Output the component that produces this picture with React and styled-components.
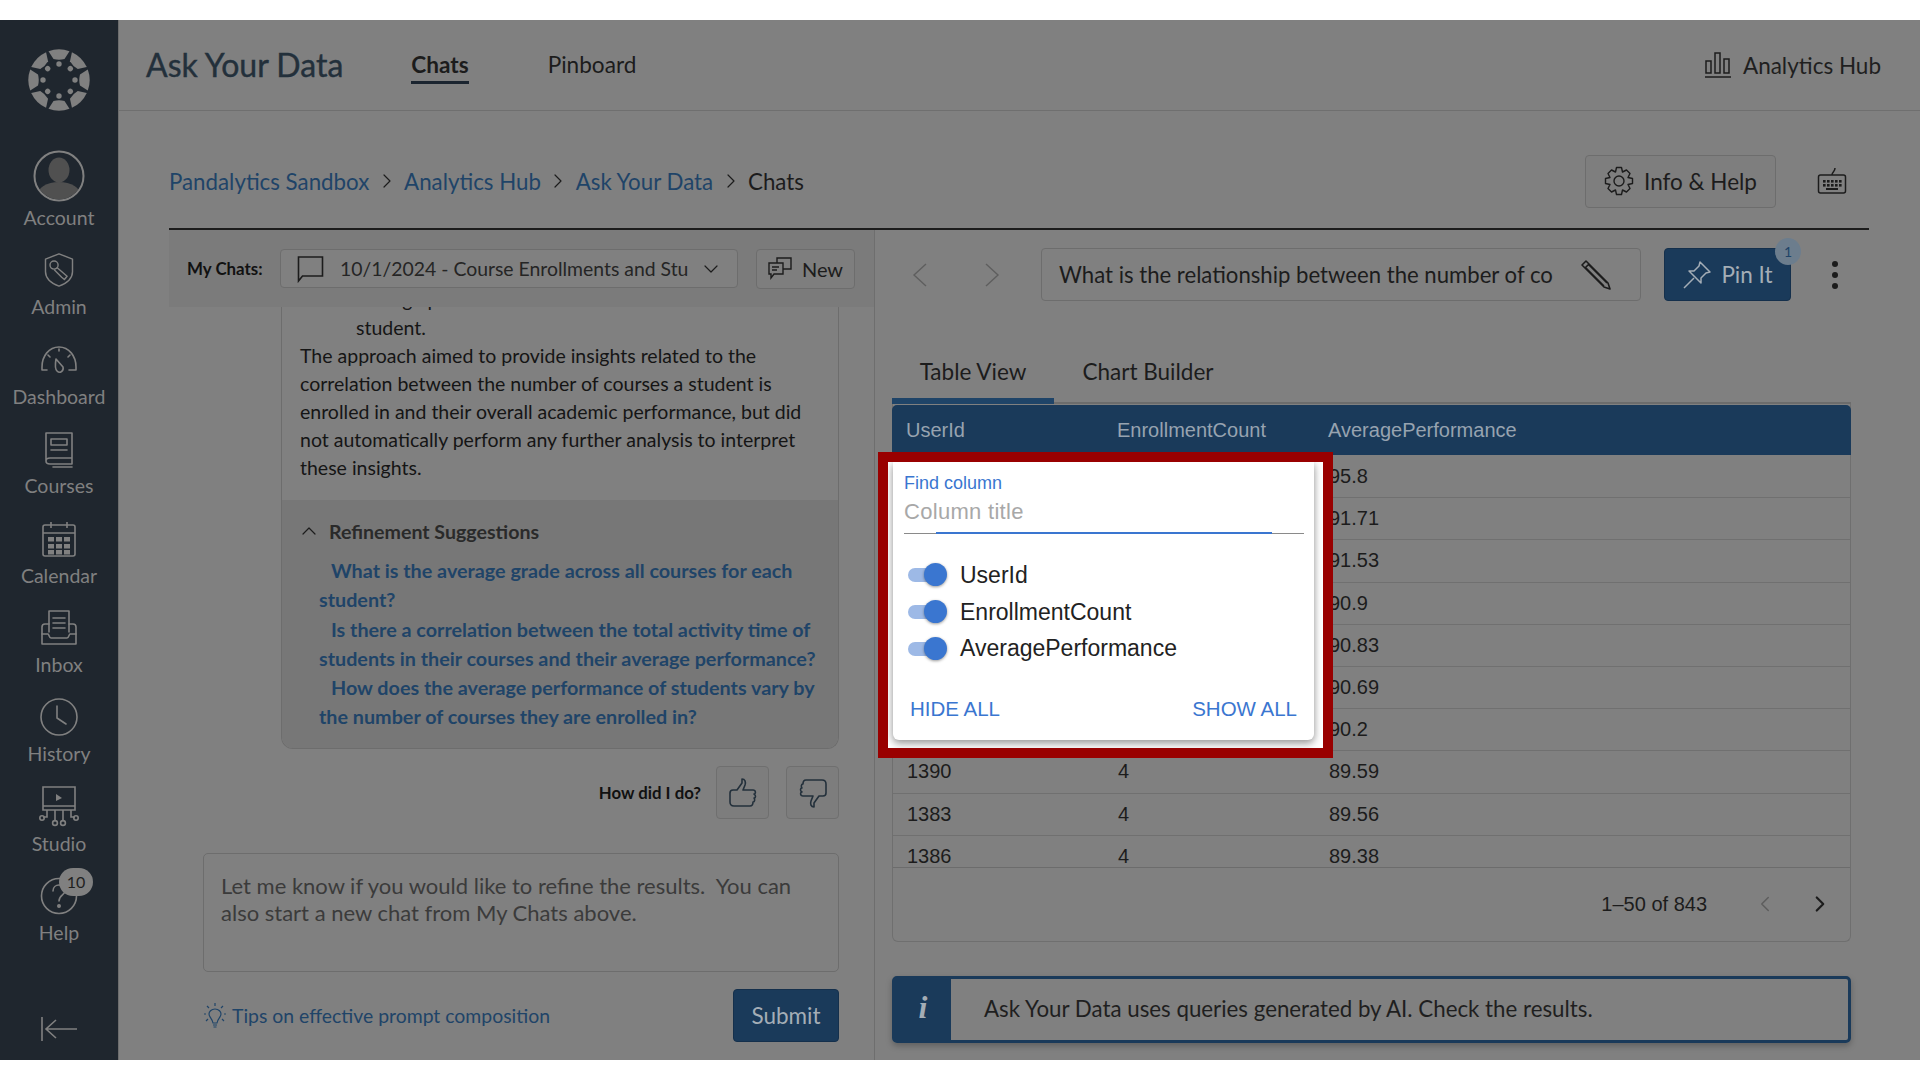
import React from 'react';
import styled, { createGlobalStyle } from 'styled-components';
import { ChevronDown, ChevronLeft, ChevronRight, ChevronUp } from 'lucide-react';

const Global = createGlobalStyle`
  html, body { margin: 0; padding: 0; background: #fff; }
  body { font-family: Lato, "Noto Sans", sans-serif; }
  * { box-sizing: border-box; }
`;

const Page = styled.div`
  width: 1920px; height: 1080px; padding: 20px 0; background: #fff; overflow: hidden;
`;
const Shell = styled.div`
  position: relative; display: flex; width: 1920px; height: 1040px; background: #808080; overflow: hidden;
`;
const Sidebar = styled.nav`
  width: 119px; flex: none; background: #1f262e; border-right: 1px solid #6d6d6d;
  display: flex; flex-direction: column; align-items: center; color: #808080;
`;
const LogoWrap = styled.div`
  height: 90px; margin-top: 29px; margin-bottom: 9px; display: flex; align-items: flex-start;
`;
const NavItem = styled.div`
  height: ${p => p.$height || 89.4}px; width: 100%; flex: none; display: flex; flex-direction: column; align-items: center; justify-content: flex-start;
  font-size: 19.5px; line-height: 24px; position: relative;
`;
const IconSlot = styled.div`
  height: ${p => p.$h || 52}px; display: flex; align-items: center; justify-content: center; margin-bottom: ${p => p.$mb ?? -1}px;
`;
const NavBadge = styled.span`
  position: absolute; left: 59px; top: -2px; width: 34px; height: 28px; border-radius: 14px;
  background: #808080; color: #1f1f1f; font-size: 16px; line-height: 28px; text-align: center;
`;
const Collapse = styled.div`
  margin-top: auto; margin-bottom: 18px; height: 26px; display: flex; align-items: center;
`;
const Main = styled.div`
  flex: 1; min-width: 0; display: flex; flex-direction: column;
`;
const Header = styled.header`
  height: 91px; flex: none; border-bottom: 1px solid #6f6f6f; padding: 0 39px 0 27px; display: flex; align-items: center;
`;
const Title = styled.h1`
  margin: 0; font-size: 32px; font-weight: 400; color: #23303b; line-height: 1; -webkit-text-stroke: .4px #23303b;
`;
const HeadTabs = styled.div`
  display: flex; gap: 79px; margin-left: 68px;
`;
const HeadTab = styled.div`
  position: relative; font-size: 22.6px; font-weight: ${p => p.$on ? 700 : 400}; color: #1c1c1c; height: 30px; line-height: 30px;
  &::after { content: ''; display: ${p => p.$on ? 'block' : 'none'}; height: 3px; background: #1b2530; margin-top: 1px; }
`;
const HubLink = styled.div`
  margin-left: auto; display: flex; align-items: center; gap: 11px; font-size: 22.5px; color: #1f1f1f;
`;
const Content = styled.div`
  flex: 1; min-height: 0; padding: 0 51px 0 50px; display: flex; flex-direction: column;
`;
const CrumbRow = styled.div`
  height: 119px; flex: none; border-bottom: 2px solid #1c1c1c; display: flex; align-items: center; padding-top: 23px;
`;
const Crumbs = styled.div`
  display: flex; align-items: center; font-size: 22.3px; gap: 5.4px;
`;
const CrumbLink = styled.span` color: #1f4468; `;
const CrumbNow = styled.span` color: #1c1c1c; `;
const InfoButton = styled.div`
  margin-left: auto; width: 191px; height: 53px; border: 1px solid #6d6d6d; border-radius: 4px; background: #7e7e7e;
  display: flex; align-items: center; justify-content: center; gap: 10px; font-size: 22.5px; color: #1c1c1c;
`;
const KeyboardSlot = styled.div`
  width: 93px; display: flex; justify-content: flex-end; padding-right: 22px;
`;
const Split = styled.div`
  flex: 1; min-height: 0; display: flex;
`;
const LeftCol = styled.section`
  width: 705px; flex: none; display: flex; flex-direction: column; padding-bottom: 17px;
`;
const ChatBar = styled.div`
  height: 77px; flex: none; background: #7b7b7b; display: flex; align-items: center; padding: 0 19px 0 18px; position: relative; z-index: 1;
`;
const BarLabel = styled.span`
  font-size: 16.9px; font-weight: 700; color: #111; width: 93px; white-space: nowrap;
`;
const Select = styled.div`
  width: 458px; height: 39px; border: 1px solid #6d6d6d; border-radius: 4px; display: flex; align-items: center;
  padding: 0 14px 0 16px; font-size: 19.4px; color: #252525; white-space: nowrap; background: #808080;
`;
const SelectText = styled.span` margin-left: 16px; flex: 1; overflow: hidden; `;
const NewButton = styled.div`
  margin-left: auto; width: 99px; height: 40px; border: 1px solid #6d6d6d; border-radius: 4px; background: #7e7e7e;
  display: flex; align-items: center; justify-content: center; gap: 10px; font-size: 20px; color: #1c1c1c;
`;
const Conversation = styled.div`
  height: 442px; flex: none; margin: 0 35px 0 112px; width: 558px; border: 1px solid #6d6d6d; border-top: 0; border-radius: 0 0 12px 12px;
  display: flex; flex-direction: column; overflow: hidden;
`;
const Reply = styled.div`
  flex: 1; min-height: 0; overflow: hidden; display: flex; flex-direction: column; justify-content: flex-end;
  padding: 0 18px 18px 18px; font-size: 19.5px; line-height: 28px; color: #151515;
`;
const Indented = styled.div` padding-left: 56px; white-space: nowrap; `;
const Suggest = styled.div`
  height: 248px; flex: none; background: #777; padding: 16px 18px 0;
`;
const SuggestHead = styled.div`
  display: flex; align-items: center; gap: 8px; font-size: 19.6px; font-weight: 700; color: #2a2a2a; height: 30px; margin-bottom: 10px; margin-left: -3px;
`;
const SuggestLink = styled.div`
  font-size: 19.75px; font-weight: 700; line-height: 29.3px; color: #1f4468; margin-left: 19px; text-indent: 12px; width: 520px; margin-right: -20px;
`;
const Rating = styled.div`
  height: 53px; margin: 17px 35px 0 0; display: flex; align-items: center; justify-content: flex-end; gap: 17px; flex: none;
`;
const RatingLabel = styled.span`
  font-size: 16.8px; font-weight: 700; color: #111; margin-right: -2px;
`;
const ThumbButton = styled.div`
  width: 53px; height: 53px; border: 1px solid #6f6f6f; border-radius: 4px; background: #7d7d7d; display: flex; align-items: center; justify-content: center;
`;
const Prompt = styled.div`
  height: 119px; margin: 34px 35px 0 34px; border: 1px solid #6d6d6d; border-radius: 5px; padding: 18px 17px; font-size: 22px; line-height: 27.3px;
  color: #3b3b3b; flex: none;
`;
const PromptFoot = styled.div`
  margin: 17px 35px 0 34px; height: 53px; display: flex; align-items: center; flex: none;
`;
const Tips = styled.div`
  display: flex; align-items: center; gap: 5px; font-size: 19.4px; color: #1f4468;
`;
const Submit = styled.div`
  margin-left: auto; width: 106px; height: 53px; border-radius: 4px; background: #1a3a5a; border: 1px solid #15304c; color: #a4adb6;
  display: flex; align-items: center; justify-content: center; font-size: 22.5px;
`;
const RightCol = styled.section`
  flex: 1; min-width: 0; border-left: 1px solid #6e6e6e; padding: 18px 18px 17px 17px; display: flex; flex-direction: column;
`;
const QueryRow = styled.div`
  height: 53px; flex: none; display: flex; align-items: center;
`;
const Arrow = styled.div`
  width: 72px; display: flex; justify-content: flex-start; padding-left: 20px;
`;
const QueryBox = styled.div`
  width: 600px; height: 53px; margin-left: 5px; border: 1px solid #6d6d6d; border-radius: 4px; display: flex; align-items: center; justify-content: space-between;
  padding: 0 28px 0 17px; font-size: 22.15px; color: #1c1c1c; white-space: nowrap;
`;
const PinButton = styled.div`
  position: relative; margin-left: 23px; width: 127px; height: 53px; border-radius: 4px; background: #1a3a5a; color: #a4adb6;
  display: flex; align-items: center; justify-content: center; gap: 9px; font-size: 22.5px; border: 1px solid #15304c;
`;
const PinBadge = styled.span`
  position: absolute; right: -11px; top: -11px; width: 26px; height: 27px; border-radius: 50%; background: #6c7d8d; color: #1f4468;
  font-size: 14px; text-align: center; line-height: 27px;
`;
const Kebab = styled.div`
  margin-left: 41px; display: flex; flex-direction: column; gap: 5px;
  span { width: 6px; height: 6px; border-radius: 50%; background: #1c1c1c; display: block; }
`;
const ViewTabs = styled.div`
  height: 103px; flex: none; display: flex; align-items: flex-end; border-bottom: 2px solid #6c6c6c;
`;
const ViewTab = styled.div`
  width: ${p => p.$w}px; height: 47px; display: flex; justify-content: center; align-items: flex-start; line-height: 30px;
  font-size: 22.5px; color: #1c1c1c; margin-bottom: -2px;
  border-bottom: 6px solid ${p => p.$on ? '#1f4468' : 'transparent'};
`;
const TableCard = styled.div`
  flex: none; height: 537.5px; border: 1px solid #6f6f6f; border-top: 0; border-radius: 0 0 6px 6px; display: flex; flex-direction: column;
  font-family: "Liberation Sans", Arial, sans-serif;
`;
const TableHead = styled.div`
  height: 50px; flex: none; background: #1a3a5a; border-radius: 5px 5px 0 0; margin: 1px -1px 1px; display: grid; grid-template-columns: 211px 211px 1fr;
  align-items: center; padding-left: 14px; font-size: 20px; color: #97a3b0;
`;
const TableBody = styled.div`
  height: 412px; flex: none; overflow: hidden; border-bottom: 1px solid #6c6c6c;
`;
const Row = styled.div`
  height: 42.2px; display: grid; grid-template-columns: 211px 211px 1fr; align-items: center; padding-left: 14px; font-size: 20px; color: #1c1c1c;
  border-bottom: 1px solid #707070;
`;
const Pager = styled.div`
  flex: 1; display: flex; align-items: center; justify-content: flex-end; font-size: 20px; color: #1c1c1c; padding-right: 17px;
`;
const PagerText = styled.span` margin-right: 45px; `;
const PagerGap = styled.span` width: 29px; `;
const Alert = styled.div`
  margin-top: 34px; height: 67px; flex: none; border: 3px solid #1a3a5a; border-radius: 5px; display: flex; box-shadow: 0 3px 6px rgba(0,0,0,.25);
`;
const AlertIcon = styled.div`
  width: 56px; flex: none; background: #1a3a5a; color: #a4adb6; font-family: "Liberation Serif", serif; font-style: italic; font-weight: 700; font-size: 32px;
  display: flex; align-items: center; justify-content: center; padding-bottom: 3px;
`;
const AlertText = styled.div`
  padding-left: 33px; display: flex; align-items: center; font-size: 22.3px; color: #1f1f1f; padding-bottom: 2px;
`;
const Highlight = styled.div`
  position: absolute; left: 878px; top: 432px; width: 455px; height: 306px; border: 10px solid #990000; background: #fff; overflow: hidden;
`;
const ColumnPanel = styled.div`
  margin-left: 5px; width: 421px; height: 278px; background: #fff; border-radius: 0 0 6px 6px; box-shadow: 0 4px 9px rgba(0,0,0,.3), 0 1px 7px rgba(0,0,0,.18);
  font-family: "Liberation Sans", Arial, sans-serif; padding: 11px 10px 0 11px; position: relative;
`;
const FieldLabel = styled.div` font-size: 18px; line-height: 20px; color: #3a76d0; `;
const FieldInput = styled.div`
  position: relative; height: 41px; border-bottom: 1px solid #8a8a8a; font-size: 22px; letter-spacing: .3px; color: #a8a8a8; line-height: 32px; padding-top: 3px;
  &::after { content: ''; position: absolute; left: 32px; right: 32px; bottom: -1px; height: 2px; background: #3a76d0; }
`;
const ToggleList = styled.div` margin-top: 23px; display: flex; flex-direction: column; `;
const ToggleRow = styled.div`
  height: 36.7px; display: flex; align-items: center; font-size: 23px; color: #222; padding-left: 4px;
`;
const Track = styled.span`
  position: relative; width: 36px; height: 14px; border-radius: 7px; background: #9db9e6; margin-right: 16px; flex: none;
  &::after { content: ''; position: absolute; right: -3px; top: -5px; width: 23px; height: 23px; border-radius: 50%; background: #3a76d0; box-shadow: 0 1px 3px rgba(0,0,0,.4); }
`;
const PanelActions = styled.div`
  position: absolute; left: 17px; right: 17px; top: 235px; display: flex; justify-content: space-between; font-size: 20.5px; color: #3a76d0; line-height: 24px;
`;

const S = ({ size = 40, vb = 40, color = '#808080', sw = 1.6, children }) => (
  <svg width={size} height={size} viewBox={`0 0 ${vb} ${vb}`} fill="none" stroke={color} strokeWidth={sw} strokeLinecap="round" strokeLinejoin="round">{children}</svg>
);

const CanvasLogo = () => (
  <svg width="62" height="62" viewBox="-31 -31 62 62" fill="#808080">
    {[0,1,2,3,4,5,6,7].map(i => (
      <g key={i} transform={`rotate(${i*45})`}>
        <path d="M-10.5 -28.8 A30.5 30.5 0 0 1 10.5 -28.8 L5.5 -21 Q0 -19.5 -5.5 -21 Z" />
        <circle cx="0" cy="-16" r="2.7" />
      </g>
    ))}
  </svg>
);
const AccountIcon = () => (
  <svg width="52" height="52" viewBox="0 0 52 52">
    <circle cx="26" cy="26" r="24.5" fill="none" stroke="#808080" strokeWidth="2" />
    <clipPath id="ac"><circle cx="26" cy="26" r="23.5" /></clipPath>
    <g clipPath="url(#ac)" fill="#505050">
      <ellipse cx="26" cy="20" rx="10.5" ry="12.5" />
      <ellipse cx="26" cy="46" rx="22" ry="14" />
    </g>
  </svg>
);
const AdminIcon = () => (
  <S size={36}><path d="M20 2 L35 8 V22 C35 30 28 35 20 38 C12 35 5 30 5 22 V8 Z" /><circle cx="14.5" cy="14.5" r="4.5" /><path d="M18 17.5 L29 27 L26 30.5 L23 28 L15 20" /></S>
);
const DashIcon = () => (
  <S size={40}><path d="M8 30 H3 V27 C3 16 10 7 20 7 C30 7 37 16 37 27 V30 H30" /><path d="M17 19 L24 27 C25 31 21 34 18 31 C16 29 16 25 17 19 Z" /><path d="M20 9 V11 M9 15 L11 17 M31 15 L29 17" /></S>
);
const CoursesIcon = () => (
  <S size={40}><path d="M7 32 V4 H33 V35 H11 C8 35 7 34 7 32 C7 30 8 29 11 29 H33" /><rect x="12" y="10" width="16" height="6" /><path d="M12 21 H28" /><path d="M14 38 H33" /></S>
);
const CalendarIcon = () => (
  <svg width="40" height="40" viewBox="0 0 40 40" fill="none" stroke="#808080" strokeWidth="1.6">
    <rect x="4" y="6" width="32" height="31" rx="2" /><path d="M4 14 H36 M12 3 V9 M28 3 V9" />
    <g fill="#808080" stroke="none">{[10,18,26].map(x => [18,25,31].map(y => <rect key={x+'-'+y} x={x-1} y={y} width="6" height="4.5" />))}</g>
  </svg>
);
const InboxIcon = () => (
  <S size={40}><path d="M10 24 V3 H30 V24" /><path d="M14 10 H26 M14 15 H26 M14 20 H26" /><path d="M10 16 H6 C4 16 3 17 3 19 V36 H37 V19 C37 17 36 16 34 16 H30" /><path d="M3 26 H9 C10 26 10 30 12 30 H28 C30 30 30 26 31 26 H37" /></S>
);
const HistoryIcon = () => (
  <S size={40}><circle cx="20" cy="20" r="18" /><path d="M18 9 V21 L27 27" /></S>
);
const StudioIcon = () => (
  <svg width="40" height="44" viewBox="0 0 40 44" fill="none" stroke="#808080" strokeWidth="1.6">
    <path d="M4 2 H36 V25 H4 Z M4 21 H36" /><path d="M17 9 L23 13 L17 16 Z" fill="#808080" stroke="none" />
    <path d="M8 25 V32 H4 M16 25 V36 M24 25 V36 M32 25 V32 H36" /><circle cx="3" cy="33" r="2.2" /><circle cx="16" cy="38" r="2.4" /><circle cx="24" cy="38" r="2.4" /><circle cx="37" cy="33" r="2.2" />
  </svg>
);
const HelpIcon = () => (
  <S size={38} vb={38}><circle cx="19" cy="19" r="17.5" /><path d="M13 14 C13 10 16 8 19 8 C23 8 25 11 25 14 C25 18 19 18 19 24" /><circle cx="19" cy="29" r="1.2" fill="#808080" /></S>
);

const nav = [
  { label: 'Account', icon: <AccountIcon />, h: 56, mb: 2, height: 96.4 },
  { label: 'Admin', icon: <AdminIcon /> },
  { label: 'Dashboard', icon: <DashIcon /> },
  { label: 'Courses', icon: <CoursesIcon /> },
  { label: 'Calendar', icon: <CalendarIcon /> },
  { label: 'Inbox', icon: <InboxIcon /> },
  { label: 'History', icon: <HistoryIcon /> },
  { label: 'Studio', icon: <StudioIcon /> },
  { label: 'Help', icon: <HelpIcon />, badge: '10' },
];

const rows = [
  ['', '', '95.8'], ['', '', '91.71'], ['', '', '91.53'], ['', '', '90.9'], ['', '', '90.83'], ['', '', '90.69'], ['', '', '90.2'],
  ['1390', '4', '89.59'], ['1383', '4', '89.56'], ['1386', '4', '89.38'],
];
const dark = '#1c1c1c';
const Sep = () => <ChevronRight size={24} strokeWidth={1.2} color={dark} />;
const LongChevron = ({ flip }) => (
  <svg width="16" height="24" viewBox="0 0 16 24" fill="none" stroke="#5e5e5e" strokeWidth="1.4" style={flip ? { transform: 'scaleX(-1)' } : undefined}><path d="M14 1 L2 12 L14 23" /></svg>
);

export default function App() {
  return (
    <Page>
      <Global />
      <Shell>
        <Sidebar>
          <LogoWrap><CanvasLogo /></LogoWrap>
          {nav.map(n => (
            <NavItem key={n.label} $height={n.height}>
              <IconSlot $h={n.h} $mb={n.mb}>{n.icon}</IconSlot>
              {n.label}
              {n.badge && <NavBadge>{n.badge}</NavBadge>}
            </NavItem>
          ))}
          <Collapse>
            <svg width="38" height="26" viewBox="0 0 38 26" fill="none" stroke="#808080" strokeWidth="1.6"><path d="M2 1 V25 M37 13 H6 M16 4 L6 13 L16 22" /></svg>
          </Collapse>
        </Sidebar>
        <Main>
          <Header>
            <Title>Ask Your Data</Title>
            <HeadTabs>
              <HeadTab $on>Chats</HeadTab>
              <HeadTab>Pinboard</HeadTab>
            </HeadTabs>
            <HubLink>
              <svg width="28" height="26" viewBox="0 0 28 26" fill="none" stroke={dark} strokeWidth="1.5"><path d="M2 9 H7 V21 H2 Z M11 1 H16 V21 H11 Z M20 7 H25 V21 H20 Z M1 25 H27" /></svg>
              Analytics Hub
            </HubLink>
          </Header>
          <Content>
            <CrumbRow>
              <Crumbs>
                <CrumbLink>Pandalytics Sandbox</CrumbLink><Sep />
                <CrumbLink>Analytics Hub</CrumbLink><Sep />
                <CrumbLink>Ask Your Data</CrumbLink><Sep />
                <CrumbNow>Chats</CrumbNow>
              </Crumbs>
              <InfoButton>
                <svg width="30" height="30" viewBox="0 0 30 30" fill="none" stroke={dark} strokeWidth="1.4" strokeLinejoin="round">
                  <path d="M12.5 1.5 H17.5 L18.5 6 L22.5 4 L26 7.5 L24 11.5 L28.5 12.5 V17.5 L24 18.5 L26 22.5 L22.5 26 L18.5 24 L17.5 28.5 H12.5 L11.5 24 L7.5 26 L4 22.5 L6 18.5 L1.5 17.5 V12.5 L6 11.5 L4 7.5 L7.5 4 L11.5 6 Z" /><circle cx="15" cy="15" r="5" />
                </svg>
                Info &amp; Help
              </InfoButton>
              <KeyboardSlot>
                <svg width="30" height="28" viewBox="0 0 30 28" fill="none" stroke={dark} strokeWidth="1.5"><rect x="1.5" y="8" width="27" height="18" rx="2" /><path d="M15 8 C15 5 18 5 18 1" /><g fill={dark} stroke="none">{[6,10,14,18,22].map(x => [13,17].map(y => <rect key={x+'-'+y} x={x} y={y} width="2.6" height="2.6" />))}<rect x="9" y="21" width="12" height="2" /></g></svg>
              </KeyboardSlot>
            </CrumbRow>
            <Split>
              <LeftCol>
                <ChatBar>
                  <BarLabel>My Chats:</BarLabel>
                  <Select>
                    <svg width="27" height="28" viewBox="0 0 27 28" fill="none" stroke={dark} strokeWidth="1.6"><path d="M1.5 2 H25.5 V21 H5.5 L1.5 26 Z" /></svg>
                    <SelectText>10/1/2024 - Course Enrollments and Stu</SelectText>
                    <ChevronDown size={24} strokeWidth={1.2} color={dark} />
                  </Select>
                  <NewButton>
                    <svg width="24" height="24" viewBox="0 0 24 24" fill="none" stroke={dark} strokeWidth="1.4"><path d="M1 6 H15 V17 H6 L3 21 V17 H1 Z M9 6 V1 H23 V12 H15 M4 10 H11 M4 13 H9" /></svg>
                    New
                  </NewButton>
                </ChatBar>
                <Conversation>
                  <Reply>
                    <Indented>average performance for each</Indented>
                    <Indented>student.</Indented>
                    <div>The approach aimed to provide insights related to the correlation between the number of courses a student is enrolled in and their overall academic performance, but did not automatically perform any further analysis to interpret these insights.</div>
                  </Reply>
                  <Suggest>
                    <SuggestHead><ChevronUp size={24} strokeWidth={1.2} color={dark} />Refinement Suggestions</SuggestHead>
                    <SuggestLink>What is the average grade across all courses for each student?</SuggestLink>
                    <SuggestLink>Is there a correlation between the total activity time of students in their courses and their average performance?</SuggestLink>
                    <SuggestLink>How does the average performance of students vary by the number of courses they are enrolled in?</SuggestLink>
                  </Suggest>
                </Conversation>
                <Rating>
                  <RatingLabel>How did I do?</RatingLabel>
                  <ThumbButton>
                    <svg width="30" height="30" viewBox="0 0 30 30" fill="none" stroke="#23303b" strokeWidth="1.6" strokeLinejoin="round"><path d="M2 15 C2 13 3 12 5 12 H9 L14 5 V1 C17 1 18 4 17 7 L15 12 H25 C28 12 28 16 26 16 C28 17 28 20 26 20 C27 21 27 24 25 24 C25 27 24 28 22 28 H6 C3 28 2 26 2 24 Z" /></svg>
                  </ThumbButton>
                  <ThumbButton>
                    <svg width="30" height="30" viewBox="0 0 30 30" fill="none" stroke="#23303b" strokeWidth="1.6" strokeLinejoin="round"><path d="M28 15 C28 17 27 18 25 18 H21 L16 25 V29 C13 29 12 26 13 23 L15 18 H5 C2 18 2 14 4 14 C2 13 2 10 4 10 C3 9 3 6 5 6 C5 3 6 2 8 2 H24 C27 2 28 4 28 6 Z" /></svg>
                  </ThumbButton>
                </Rating>
                <Prompt>Let me know if you would like to refine the results.&nbsp; You can also start a new chat from My Chats above.</Prompt>
                <PromptFoot>
                  <Tips>
                    <svg width="24" height="28" viewBox="0 0 24 28" fill="none" stroke="#1f4468" strokeWidth="1.2"><path d="M12 7 C8 7 6 10 6 12 C6 15 9 16 10 21 H14 C15 16 18 15 18 12 C18 10 16 7 12 7 Z M10 23 H14 M10.5 25 H13.5 M12 1 V4 M4 4 L6 6 M20 4 L18 6 M1 12 H3 M21 12 H23 M3 19 L5 17 M21 19 L19 17" /></svg>
                    Tips on effective prompt composition
                  </Tips>
                  <Submit>Submit</Submit>
                </PromptFoot>
              </LeftCol>
              <RightCol>
                <QueryRow>
                  <Arrow><LongChevron /></Arrow>
                  <Arrow><LongChevron flip /></Arrow>
                  <QueryBox>
                    What is the relationship between the number of co
                    <svg width="32" height="32" viewBox="0 0 32 32" fill="none" stroke={dark} strokeWidth="1.6" strokeLinejoin="round"><path d="M2 6 L6 2 L28 24 L30 30 L24 28 Z M5 9 L9 5 M9 6 L27 24 M6 9 L24 27" /></svg>
                  </QueryBox>
                  <PinButton>
                    <svg width="30" height="30" viewBox="0 0 30 30" fill="none" stroke="#a4adb6" strokeWidth="1.5" strokeLinejoin="round"><path d="M18 2 L28 12 L24 13 L19 18 L19 23 L7 11 L12 11 L17 6 Z M12 18 L2 28" /></svg>
                    Pin It
                    <PinBadge>1</PinBadge>
                  </PinButton>
                  <Kebab><span /><span /><span /></Kebab>
                </QueryRow>
                <ViewTabs>
                  <ViewTab $w={162} $on>Table View</ViewTab>
                  <ViewTab $w={188}>Chart Builder</ViewTab>
                </ViewTabs>
                <TableCard>
                  <TableHead>
                    <span>UserId</span><span>EnrollmentCount</span><span>AveragePerformance</span>
                  </TableHead>
                  <TableBody>
                    {rows.map((r, i) => (
                      <Row key={i}><span>{r[0]}</span><span>{r[1]}</span><span>{r[2]}</span></Row>
                    ))}
                  </TableBody>
                  <Pager>
                    <PagerText>1–50 of 843</PagerText>
                    <ChevronLeft size={26} strokeWidth={1.4} color="#5e5e5e" />
                    <PagerGap />
                    <ChevronRight size={26} strokeWidth={2} color={dark} />
                  </Pager>
                </TableCard>
                <Alert>
                  <AlertIcon>i</AlertIcon>
                  <AlertText>Ask Your Data uses queries generated by AI. Check the results.</AlertText>
                </Alert>
              </RightCol>
            </Split>
          </Content>
        </Main>
        <Highlight>
          <ColumnPanel>
            <FieldLabel>Find column</FieldLabel>
            <FieldInput>Column title</FieldInput>
            <ToggleList>
              {['UserId', 'EnrollmentCount', 'AveragePerformance'].map(c => (
                <ToggleRow key={c}><Track />{c}</ToggleRow>
              ))}
            </ToggleList>
            <PanelActions><span>HIDE ALL</span><span>SHOW ALL</span></PanelActions>
          </ColumnPanel>
        </Highlight>
      </Shell>
    </Page>
  );
}
